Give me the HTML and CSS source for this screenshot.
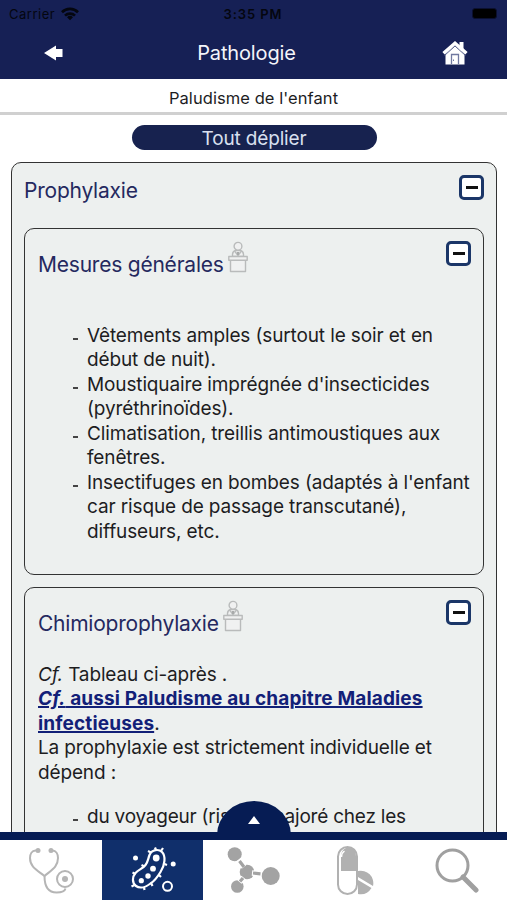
FILE: index.html
```html
<!DOCTYPE html>
<html lang="fr">
<head>
<meta charset="utf-8">
<title>Pathologie</title>
<link rel="stylesheet" href="styles.css">
</head>
<body>
<svg class="defs" aria-hidden="true">
  <symbol id="speaker" viewBox="0 0 20 32">
    <g fill="#f0f1f1" stroke="#b9bbbb" stroke-width="1.4" stroke-linejoin="round">
      <path d="M4.500 15.500v-2q0-3 3-4h5q3 1 3 4v2z"/>
      <circle cx="10" cy="5.300" r="3.900"/>
      <path d="M7 10.500l3 4 3-4" fill="none"/>
      <path d="M2.500 19h15v11.500h-15z"/>
      <path d="M.8 15.500h18.400v3.700h-18.400z"/>
    </g>
    <path d="M9 11h2v3h-2z" fill="#a8aaaa"/>
  </symbol>
</svg>
<div class="app">
  <header class="header">
    <div class="status">
      <div class="carrier"><span>Carrier</span>
        <svg width="18" height="14" viewBox="0 0 18 14"><g fill="none" stroke="#04060f" stroke-width="2.700"><path d="M1 5.200a11.500 11.500 0 0 1 16 0"/><path d="M4 8.600a7.200 7.200 0 0 1 10 0"/></g><path d="M9 13.200l-3-3a4.300 4.300 0 0 1 6 0z" fill="#04060f"/></svg>
      </div>
      <span class="time">3:35 PM</span>
      <span class="battery"></span>
    </div>
    <div class="bar">
      <svg class="back" width="19" height="16" viewBox="0 0 19 16"><path d="M0 8L12 .5v3.500h6.500v8h-6.500v3.500z" fill="#fff"/></svg>
      <h1>Pathologie</h1>
      <svg class="home" width="26" height="24" viewBox="0 0 26 24"><path d="M17.500 1h4v9h-4z" fill="#fff"/><path d="M3.500 12.500L13 4.500l9.500 8v11h-19z" fill="#fff"/><path d="M2.500 14.500L13 5l10.500 9.500" fill="none" stroke="#4b5584" stroke-width="1"/><path d="M1.500 12.200L13 2.300l11.500 9.900" fill="none" stroke="#fff" stroke-width="3.400"/><path d="M9.500 23v-9.500h7V23" fill="none" stroke="#7079a0" stroke-width="1.300"/><path d="M11.500 18.500v1.500" stroke="#7079a0"/></svg>
    </div>
  </header>
  <div class="subtitle">Paludisme de l'enfant</div>
  <main class="content">
    <button class="expand">Tout déplier</button>
    <section class="card outer">
      <div class="outer-head"><h2>Prophylaxie</h2><i class="toggle"></i></div>
      <section class="card inner first">
        <div class="head"><h2>Mesures générales</h2><svg class="speaker"><use href="#speaker"/></svg><i class="toggle"></i></div>
        <ul>
          <li>Vêtements amples (surtout le soir et en<br>début de nuit).</li>
          <li>Moustiquaire imprégnée d'insecticides<br>(pyréthrinoïdes).</li>
          <li>Climatisation, treillis antimoustiques aux<br>fenêtres.</li>
          <li>Insectifuges en bombes (adaptés à l'enfant<br>car risque de passage transcutané),<br>diffuseurs, etc.</li>
        </ul>
      </section>
      <section class="card inner">
        <div class="head"><h2>Chimioprophylaxie</h2><svg class="speaker"><use href="#speaker"/></svg><i class="toggle"></i></div>
        <p><em>Cf.</em> Tableau ci-après .<br><a><em>Cf.</em> aussi Paludisme au chapitre Maladies<br>infectieuses</a>.<br>La prophylaxie est strictement individuelle et<br>dépend :</p>
        <ul class="second"><li>du voyageur (risque majoré chez les</li></ul>
      </section>
    </section>
  </main>
  <nav class="nav">
    <div class="handle"><svg width="12" height="8" viewBox="0 0 12 8"><path d="M6 0l6 8H0z" fill="#fff"/></svg></div>
    <div class="tab">
      <svg width="48" height="48" viewBox="0 0 48 48"><g fill="none" stroke="#b5b5b5" stroke-width="2"><path d="M11 4.500H8.500C5 4.500 3 8 3 12c0 9 7 12 14.500 18 7-6 13.500-9 13.500-18 0-4-2-7.500-5.500-7.500H23"/><path d="M17.500 30c0 9 3 16.500 12 16.500 5.500 0 8.500-2 9-4"/><circle cx="38" cy="33" r="8"/></g><g fill="#b5b5b5"><circle cx="11" cy="4.500" r="2.500"/><circle cx="24" cy="4.500" r="2.500"/><circle cx="38" cy="33" r="3"/></g></svg>
    </div>
    <div class="tab active">
      <svg width="48" height="48" viewBox="0 0 48 48"><g fill="none" stroke="#fff" stroke-width="2.200"><path d="M20.500 9C23 3 30 3 33 6c4 4 3 13-1.500 20-3 5-6 9-10 11.500C17 41 11 43 7 40c-4-3-4-9-.500-13 3-3.500 7-4 10-8 2.500-3 2.500-6 4-10z"/><path d="M22 6.500l-3-1.500M27 4l-1-2.500M32 5l2-3M35.500 18l2.500 1M30 29l2 2M22 37l1.500 3M15 41l.5 3M5.500 39l-3 1.500M6.500 28l-3-1.500M15.500 20.500l-3-1.500"/><circle cx="38.500" cy="40.300" r="4.500" stroke-width="2"/></g><g fill="#fff"><circle cx="27.200" cy="12" r="3.400"/><circle cx="24" cy="22.700" r="2.900"/><circle cx="19" cy="30" r="2.700"/><circle cx="12.300" cy="34.700" r="2.600"/><circle cx="6.500" cy="12" r="2.500"/><circle cx="44.200" cy="18" r="2.500"/></g></svg>
    </div>
    <div class="tab">
      <svg width="54" height="48" viewBox="0 0 54 48"><g fill="#a3a3a3"><circle cx="7.700" cy="8.300" r="7"/><circle cx="20" cy="26" r="7.300"/><circle cx="10.300" cy="40.500" r="6.300"/><circle cx="43.700" cy="30" r="9"/></g><path d="M11.500 13.500l5.500 7.500M25 27l9.500 1M16.500 31.500l-4 4.500" fill="none" stroke="#fff" stroke-width="5.500"/><path d="M12.500 15l4.500 6M26 27l7.500.8M16 32l-3 3.500" fill="none" stroke="#a3a3a3" stroke-width="3.200"/></svg>
    </div>
    <div class="tab">
      <svg width="40" height="50" viewBox="0 0 40 50"><path d="M22 26A12.500 12.500 0 0 1 37 41L22 32zM22 35l13.500 8A13 13 0 0 1 22 49z" fill="#b1b1b1"/><rect x="2" y="2" width="19" height="47" rx="9.500" fill="#fff" stroke="#b1b1b1" stroke-width="2"/><path d="M5 26V12q0-7 5-9 10-2 10 8v15z" fill="#b1b1b1"/><path d="M5.500 12q0-4 3-6" fill="none" stroke="#fff" stroke-width="1.500"/></svg>
    </div>
    <div class="tab">
      <svg width="44" height="46" viewBox="0 0 44 46"><g fill="none" stroke="#a0a0a0"><circle cx="17.500" cy="18.500" r="15.500" stroke-width="3"/><path d="M28 30L41 43" stroke-width="5" stroke-linecap="round"/></g></svg>
    </div>
  </nav>
</div>
</body>
</html>
```
FILE: styles.css
```css
* { box-sizing: border-box; }
body { margin: 0; background: #fff; color: #1d1d1f; font-family: Inter, "Liberation Sans", sans-serif; }
h1, h2, p, ul { margin: 0; padding: 0; font-weight: 400; }
.defs { position: absolute; width: 0; height: 0; }
.app { width: 507px; height: 900px; display: flex; flex-direction: column; overflow: hidden; }

.header { height: 79px; flex: none; background: #162055; }
.status { height: 27px; padding: 0 10px 0 9px; display: grid; grid-template-columns: 1fr auto 1fr; align-items: center; color: #04060f; font-size: 13px; }
.carrier { display: flex; align-items: center; gap: 6px; letter-spacing: .5px; }
.time { font-weight: 600; letter-spacing: .9px; }
.battery { width: 25px; height: 11px; justify-self: end; background: #000; border: 1px solid #0b1030; border-radius: 3px; }
.bar { height: 52px; padding: 0 39px 0 44px; display: grid; grid-template-columns: 21px 1fr 26px; align-items: center; }
.bar h1 { padding-right: 14px; color: #f4f5fa; font-size: 20px; line-height: 52px; letter-spacing: -.15px; text-align: center; }
.subtitle { height: 36px; flex: none; border-bottom: 3px solid #d0d0d0; font-size: 16.500px; line-height: 38px; letter-spacing: .07px; text-align: center; }

.content { flex: 1; min-height: 0; overflow: hidden; padding: 10px 10px 0 11px; }
.expand { display: block; width: 245px; height: 25px; margin: 0 auto 12px; padding: 0; border: 0; border-radius: 13px; background: #17224f; color: #d9e0f0; font: 19px/27px Inter, sans-serif; letter-spacing: -.15px; }
.card { border: 1.500px solid #333; border-radius: 10px; background: #edf0ef; }
.outer { height: 800px; padding: 0 12px; }
.outer-head { height: 65px; padding-top: 12px; display: flex; justify-content: space-between; }
h2 { color: #25295f; font-size: 21px; line-height: 30px; letter-spacing: -.22px; white-space: nowrap; }
.outer-head h2 { padding-top: 1px; }
.toggle { width: 25px; height: 25px; flex: none; display: grid; place-items: center; border: 3px solid #1b3668; border-radius: 5px; background: #fff; }
.toggle::after { content: ""; width: 12px; height: 2.500px; background: #111; }
.inner { padding: 0 12px 0 13px; height: 400px; }
.inner.first { height: 347px; margin-bottom: 12px; }
.head { height: 72px; display: flex; padding-top: 12px; }
.head h2 { padding-top: 9px; }
.head .toggle { margin-left: auto; }
.speaker { width: 20px; height: 32px; margin-left: 4px; }
ul { list-style: none; padding: 23px 0 0 49px; font-size: 19px; line-height: 24.450px; letter-spacing: -.13px; white-space: nowrap; }
li { position: relative; }
li::before { content: ""; position: absolute; left: -14px; top: 14px; width: 5px; height: 2px; background: #444; }
p { padding-top: 3px; font-size: 19px; line-height: 24.450px; letter-spacing: -.14px; white-space: nowrap; }
a { color: #122078; font-weight: 700; letter-spacing: .14px; text-decoration: underline; text-decoration-thickness: 1.500px; }
ul.second { padding-top: 20px; letter-spacing: -.22px; }

.nav { position: relative; height: 68px; flex: none; display: grid; grid-template-columns: 102px 101px 102px 101px 101px; border-top: 8px solid #061c54; background: #fff; }
.handle { position: absolute; left: 217px; top: -39px; width: 74px; height: 39px; display: grid; justify-content: center; padding-top: 15px; border-radius: 37px 37px 0 0 / 34px 34px 0 0; background: #061c54; }
.tab { display: grid; place-items: center; }
.active { background: #102f6b; }
```
